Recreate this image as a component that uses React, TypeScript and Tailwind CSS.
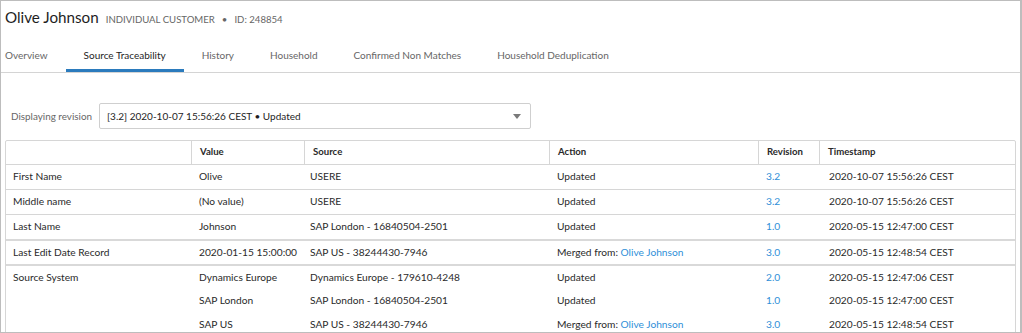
import { ReactNode } from "react";

type Row = {
  label?: string;
  value: string;
  source: string;
  action: string;
  merged?: boolean;
  revision: string;
  timestamp: string;
};

const groups: Row[][] = [
  [
    {
      label: "First Name",
      value: "Olive",
      source: "USERE",
      action: "Updated",
      revision: "3.2",
      timestamp: "2020-10-07 15:56:26 CEST",
    },
  ],
  [
    {
      label: "Middle name",
      value: "(No value)",
      source: "USERE",
      action: "Updated",
      revision: "3.2",
      timestamp: "2020-10-07 15:56:26 CEST",
    },
  ],
  [
    {
      label: "Last Name",
      value: "Johnson",
      source: "SAP London - 16840504-2501",
      action: "Updated",
      revision: "1.0",
      timestamp: "2020-05-15 12:47:00 CEST",
    },
  ],
  [
    {
      label: "Last Edit Date Record",
      value: "2020-01-15 15:00:00",
      source: "SAP US - 38244430-7946",
      action: "Merged from:",
      merged: true,
      revision: "3.0",
      timestamp: "2020-05-15 12:48:54 CEST",
    },
  ],
  [
    {
      label: "Source System",
      value: "Dynamics Europe",
      source: "Dynamics Europe - 179610-4248",
      action: "Updated",
      revision: "2.0",
      timestamp: "2020-05-15 12:47:06 CEST",
    },
    {
      value: "SAP London",
      source: "SAP London - 16840504-2501",
      action: "Updated",
      revision: "1.0",
      timestamp: "2020-05-15 12:47:00 CEST",
    },
    {
      value: "SAP US",
      source: "SAP US - 38244430-7946",
      action: "Merged from:",
      merged: true,
      revision: "3.0",
      timestamp: "2020-05-15 12:48:54 CEST",
    },
  ],
];

const tabs = [
  "Overview",
  "Source Traceability",
  "History",
  "Household",
  "Confirmed Non Matches",
  "Household Deduplication",
];

const cols = "grid grid-cols-[185px_113px_245px_209px_61px_1fr]";

function HeadCell({ children, first }: { children?: ReactNode; first?: boolean }) {
  return (
    <div
      className={`h-[23px] flex items-center pl-[8px] text-[9.6px] font-bold text-[#2a2a2a] ${
        first ? "" : "border-l border-[#d6d6d6]"
      }`}
    >
      {children}
    </div>
  );
}

export default function App() {
  return (
    <div
      className="w-[1022px] h-[333px] overflow-hidden bg-white border border-[#bdbdbd] border-r-2 text-[#2a2a2a]"
      style={{ fontFamily: 'Lato, "Noto Sans", sans-serif' }}
    >
      {/* customer header */}
      <div className="h-[33px] flex items-center pl-[4px]">
        <div className="flex items-baseline whitespace-nowrap">
          <span className="text-[15.2px] text-[#1e1e1e]">Olive Johnson</span>
          <span className="ml-[7px] text-[9.6px] text-[#666]">INDIVIDUAL CUSTOMER</span>
          <span className="mx-[7px] text-[9.6px] text-[#666]">•</span>
          <span className="text-[9.6px] text-[#666]">ID: 248854</span>
        </div>
      </div>

      {/* tabs */}
      <div className="flex mt-[6px] border-b border-[#d4d4d4] pl-[4px] whitespace-nowrap">
        {tabs.map((t, i) => (
          <div
            key={t}
            className={`h-[32px] flex items-center pb-[1px] text-[10px] ${
              i === 0 ? "pr-[18px]" : "px-[18px]"
            } ${
              i === 1
                ? "text-[#1e1e1e] border-b-[3px] border-[#2b7bbd] pt-[2px] pb-0"
                : "text-[#666]"
            }`}
          >
            {t}
          </div>
        ))}
      </div>

      {/* revision select */}
      <div className="flex items-center mt-[30px] pl-[10px]">
        <span className="text-[9.9px] text-[#666] mr-[7px]">Displaying revision</span>
        <div className="w-[432px] h-[26px] border border-[#cfcfcf] rounded-[2px] flex items-center justify-between pl-[7px] pr-[9px]">
          <span className="text-[10px] text-[#1e1e1e]">
            [3.2] 2020-10-07 15:56:26 CEST • Updated
          </span>
          <svg width="8" height="5" viewBox="0 0 8 5">
            <path d="M0 0h8L4 5z" fill="#7a7a7a" />
          </svg>
        </div>
      </div>

      {/* trace table */}
      <div className="mx-[4px] mt-[11px] border border-[#d6d6d6] rounded-t-[2px] text-[10.2px] whitespace-nowrap">
        <div className={`${cols} border-b border-[#d6d6d6]`}>
          <HeadCell first />
          <HeadCell>Value</HeadCell>
          <HeadCell>Source</HeadCell>
          <HeadCell>Action</HeadCell>
          <HeadCell>Revision</HeadCell>
          <HeadCell>Timestamp</HeadCell>
        </div>
        {groups.map((g, gi) => (
          <div
            key={gi}
            className={
              gi === 0
                ? ""
                : gi >= 3
                ? "border-t-2 border-[#d9d9d9]"
                : "border-t border-[#d6d6d6]"
            }
          >
            {g.map((r, ri) => (
              <div
                key={ri}
                className={`${cols} ${
                  gi >= 3 && ri === 0 ? "h-[23px]" : "h-[24px]"
                } items-center`}
              >
                <div className="pl-[7px]">{r.label}</div>
                <div className="pl-[8px]">{r.value}</div>
                <div className="pl-[6px]">{r.source}</div>
                <div className="pl-[8px]">
                  {r.action}
                  {r.merged && <span className="text-[#2f8fd8]"> Olive Johnson</span>}
                </div>
                <div className="pl-[8px] text-[#2f8fd8]">{r.revision}</div>
                <div className="pl-[10px]">{r.timestamp}</div>
              </div>
            ))}
          </div>
        ))}
      </div>
    </div>
  );
}
